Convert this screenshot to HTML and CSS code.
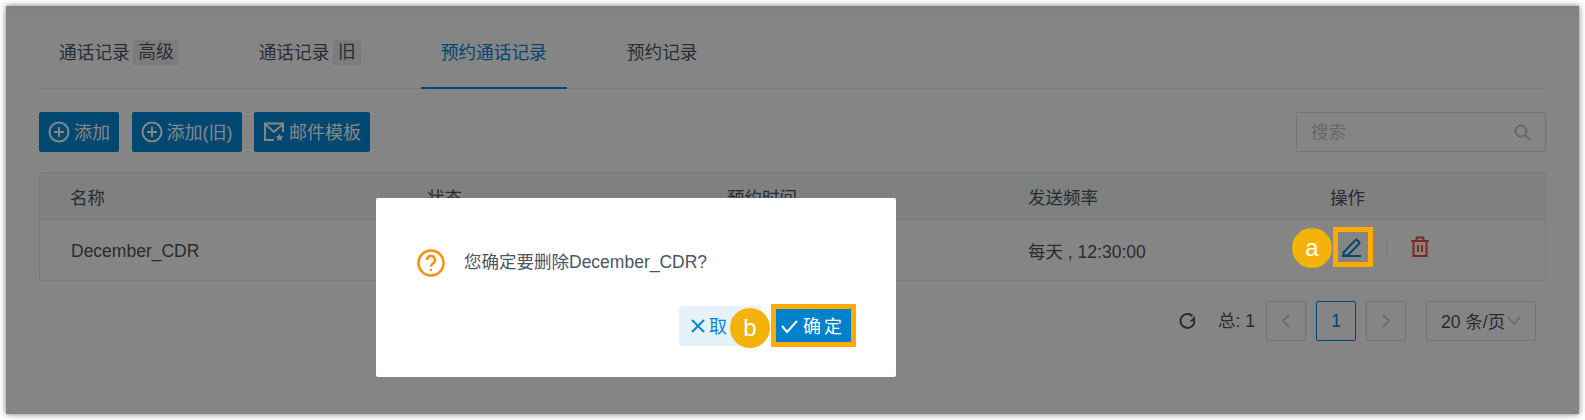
FILE: index.html
```html
<!DOCTYPE html>
<html lang="zh">
<head>
  <meta charset="UTF-8" />
  <title>预约通话记录</title>
  <link rel="stylesheet" href="styles.css">
</head>
<body>
  <div class="page">
    <div class="topbar"></div>
    <div class="content">
      <nav class="tabs">
        <a class="tab">通话记录<span class="tag">高级</span></a>
        <a class="tab">通话记录<span class="tag">旧</span></a>
        <a class="tab active">预约通话记录</a>
        <a class="tab">预约记录</a>
      </nav>

      <div class="toolbar">
        <button class="btn-primary">
          <svg width="22" height="22" viewBox="0 0 22 22"><circle cx="11" cy="11" r="9.5"/><path d="M11 6v10M6 11h10"/></svg>
          添加
        </button>
        <button class="btn-primary">
          <svg width="22" height="22" viewBox="0 0 22 22"><circle cx="11" cy="11" r="9.5"/><path d="M11 6v10M6 11h10"/></svg>
          添加(旧)
        </button>
        <button class="btn-primary">
          <svg width="22" height="22" viewBox="0 0 22 22"><path d="M11 19H2V2.500h18V11M2 3l9 8 9-8"/><path class="star" d="M16.500 11.500l1.500 3.300 3.500.4-2.600 2.300.8 3.500-3.200-1.800-3.200 1.800.8-3.500-2.600-2.300 3.500-.4z"/></svg>
          邮件模板
        </button>
        <div class="search">
          <span class="placeholder">搜索</span>
          <svg width="17" height="17" viewBox="0 0 17 17"><circle cx="7" cy="7" r="5.500"/><path d="M11 11l5 5"/></svg>
        </div>
      </div>

      <div class="table">
        <div class="row head">
          <div>名称</div>
          <div>状态</div>
          <div>预约时间</div>
          <div>发送频率</div>
          <div>操作</div>
        </div>
        <div class="row body-row">
          <div class="name">December_CDR</div>
          <div></div>
          <div></div>
          <div>每天 , 12:30:00</div>
          <div class="actions">
            <svg class="icon-edit" width="20" height="19" viewBox="0 0 20 19"><path d="M1.500 14.500L12.500 3l2-1.500 3 3-1 2-11 11H1.500zM0 18h19"/></svg>
            <span class="divider"></span>
            <svg class="icon-trash" width="20" height="21" viewBox="0 0 20 21"><path d="M1 5h18M6.500 5V1.500h7V5M3.500 5v15h13V5M8 9v7M12 9v7"/></svg>
          </div>
        </div>
      </div>

      <div class="pagination">
        <svg class="refresh" width="17" height="17" viewBox="0 0 17 17"><path d="M13.500 3A7 7 0 1 0 15.500 8.500"/><path class="fill" d="M16 3v5.500h-5.500z"/></svg>
        <span class="total">总: 1</span>
        <span class="pager"><svg width="10" height="14" viewBox="0 0 10 14"><path d="M8 1L2 7l6 6"/></svg></span>
        <span class="pager current">1</span>
        <span class="pager"><svg width="10" height="14" viewBox="0 0 10 14"><path d="M2 1l6 6-6 6"/></svg></span>
        <span class="page-size">20 条/页<svg width="14" height="9" viewBox="0 0 14 9"><path d="M1 1l6 7 6-7"/></svg></span>
      </div>
    </div>

    <div class="overlay"></div>

    <div class="modal">
      <div class="modal-body">
        <svg width="28" height="28" viewBox="0 0 28 28"><circle cx="14" cy="14" r="12.500"/><path d="M10 11a4 4 0 1 1 6.500 3c-1.500 1.200-2.500 1.800-2.500 3.500"/><circle class="dot" cx="14" cy="21" r="1.200"/></svg>
        <span class="message">您确定要删除December_CDR?</span>
      </div>
      <div class="modal-footer">
        <button class="btn-cancel">
          <svg width="14" height="14" viewBox="0 0 14 14"><path d="M1 1l12 12M13 1L1 13"/></svg>
          取消
        </button>
        <button class="btn-ok">
          <svg width="17" height="13" viewBox="0 0 17 13"><path d="M1 6l5 6L16 1"/></svg>
          确定
        </button>
      </div>
      <span class="highlight ok-mark"></span>
      <span class="badge badge-b">b</span>
    </div>

    <span class="highlight edit-mark"></span>
    <span class="badge badge-a">a</span>
  </div>
</body>
</html>
```

FILE: styles.css
```css
* {
  box-sizing: border-box;
}
body {
  margin: 0;
  background-color: #fff;
  font-family: "Liberation Sans", "Noto Sans CJK SC", sans-serif;
  font-size: 17.5px;
  color: #4f5663;
}
svg {
  fill: none;
  stroke: currentColor;
}
button {
  font: inherit;
  border: none;
  padding: 0;
}

.page {
  position: relative;
  width: 1573px;
  height: 408px;
  margin: 6px;
  background-color: #fff;
  box-shadow: 0 0 6px rgba(0,0,0,0.55);
  overflow: hidden;
}
.topbar {
  height: 9px;
  background-color: #f6f7f9;
}
.content {
  padding: 0 33px;
}

/* tabs */
.tabs {
  display: flex;
  gap: 40px;
  height: 74px;
  border-bottom: 1px solid #eaebed;
  font-size: 17.7px;
}
.tab {
  display: flex;
  align-items: center;
  height: 74px;
  padding: 0 20px 2px;
}
.tab.active {
  color: #0088da;
  border-bottom: 2px solid #0088da;
  padding-bottom: 0;
}
.tag {
  margin: 2px 0 0 3.5px;
  padding: 0 5px;
  height: 25px;
  line-height: 25px;
  background-color: #eee;
  border-radius: 2px;
}

/* toolbar */
.toolbar {
  display: flex;
  gap: 12.5px;
  margin-top: 23px;
  height: 40px;
}
.btn-primary {
  display: flex;
  align-items: center;
  gap: 4px;
  height: 40px;
  padding: 0 9px 2px;
  background-color: #0088da;
  color: #fff;
  border-radius: 2px;
  font-size: 18px;
}
.btn-primary svg {
  stroke-width: 2;
  margin-top: 2px;
}
.btn-primary .star {
  fill: #fff;
  stroke: #0088da;
  stroke-width: 1;
}
.search {
  display: flex;
  align-items: center;
  justify-content: space-between;
  width: 250px;
  margin-left: auto;
  padding: 0 14px 3px;
  border: 1px solid #dcdfe6;
  border-radius: 2px;
  color: #c8c8c8;
}
.search svg {
  stroke-width: 2;
  margin-top: 3px;
}

/* table */
.table {
  margin-top: 20px;
  border: 1px solid #ededed;
  border-radius: 2px;
}
.row {
  display: grid;
  grid-template-columns: 357px 300px 301px 302px 1fr;
  align-items: center;
  padding-left: 30px;
}
.row.head {
  height: 47px;
  background-color: #f4f5f6;
  border-bottom: 1px solid #ededed;
}
.row.body-row {
  height: 60px;
}
.name {
  padding: 3px 0 0 1px;
}
.actions {
  display: flex;
  align-items: center;
  color: #ee4f3a;
}
.icon-edit {
  margin-left: 12px;
  margin-top: -6px;
  color: #0088da;
  stroke-width: 2;
}
.divider {
  width: 1px;
  height: 15px;
  margin: -6px 0 0 24px;
  background-color: #e4e4e4;
}
.icon-trash {
  margin-left: 23px;
  margin-top: -7px;
  stroke-width: 2;
}

/* pagination */
.pagination {
  display: flex;
  align-items: center;
  justify-content: flex-end;
  height: 40px;
  margin-top: 20px;
  padding-right: 10px;
}
.refresh {
  stroke-width: 2;
}
.refresh .fill {
  fill: currentColor;
  stroke: none;
}
.total {
  margin: -4px 11px 0 22px;
}
.pager {
  display: flex;
  align-items: center;
  justify-content: center;
  width: 40px;
  height: 40px;
  margin-right: 10px;
  border: 1px solid #dcdfe6;
  border-radius: 2px;
  color: #c8c8c8;
}
.pager svg {
  stroke-width: 1.500;
}
.pager.current {
  border-color: #0088da;
  color: #0088da;
}
.page-size {
  display: flex;
  align-items: center;
  width: 110px;
  height: 40px;
  margin-left: 10px;
  padding: 0 0 2px 14px;
  border: 1px solid #dcdfe6;
  border-radius: 2px;
}
.page-size svg {
  margin-left: 2px;
  color: #c8c8c8;
  stroke-width: 1.500;
}

/* dim layer and dialog */
.overlay {
  position: absolute;
  inset: 0;
  background-color: rgba(0,0,0,0.48);
}
.modal {
  position: absolute;
  left: 370px;
  top: 192px;
  width: 520px;
  height: 179px;
  background-color: #fff;
  border-radius: 2px;
  color: #4a5567;
}
.modal-body {
  display: flex;
  align-items: center;
  gap: 19px;
  padding: 51px 0 0 41px;
}
.modal-body svg {
  color: #ff8c0a;
  stroke-width: 2.500;
}
.modal-body .dot {
  fill: #ff8c0a;
  stroke: none;
}
.message {
  margin-top: -5px;
}
.modal-footer {
  display: flex;
  justify-content: flex-end;
  gap: 12px;
  margin-top: 29px;
  padding-right: 42px;
}
.btn-cancel {
  display: flex;
  align-items: center;
  gap: 4px;
  width: 82px;
  height: 40px;
  padding: 0 0 3px 12px;
  background-color: #e5f2fa;
  color: #0a85d1;
  border-radius: 2px;
  font-size: 18px;
  letter-spacing: 3px;
  white-space: nowrap;
  overflow: hidden;
}
.btn-cancel svg {
  stroke-width: 2;
  margin-top: 3px;
}
.btn-ok {
  display: flex;
  align-items: center;
  gap: 5px;
  width: 81px;
  height: 40px;
  padding: 0 0 3px 8px;
  background-color: #0081cc;
  color: #fff;
  font-size: 18px;
  letter-spacing: 3px;
}
.btn-ok svg {
  stroke-width: 2;
  margin-top: 3px;
}

/* annotations on top of the screenshot */
.highlight {
  position: absolute;
  border: 5px solid #ffaa00;
}
.edit-mark {
  left: 1327px;
  top: 221px;
  width: 40px;
  height: 40px;
}
.ok-mark {
  left: 395px;
  top: 106px;
  width: 85px;
  height: 43px;
}
.badge {
  position: absolute;
  width: 40px;
  height: 40px;
  line-height: 40px;
  text-align: center;
  border-radius: 50%;
  background-color: #f5b30a;
  color: #fff;
  font-size: 24px;
}
.badge-a {
  left: 1286px;
  top: 222px;
}
.badge-b {
  left: 354px;
  top: 110px;
}
```
